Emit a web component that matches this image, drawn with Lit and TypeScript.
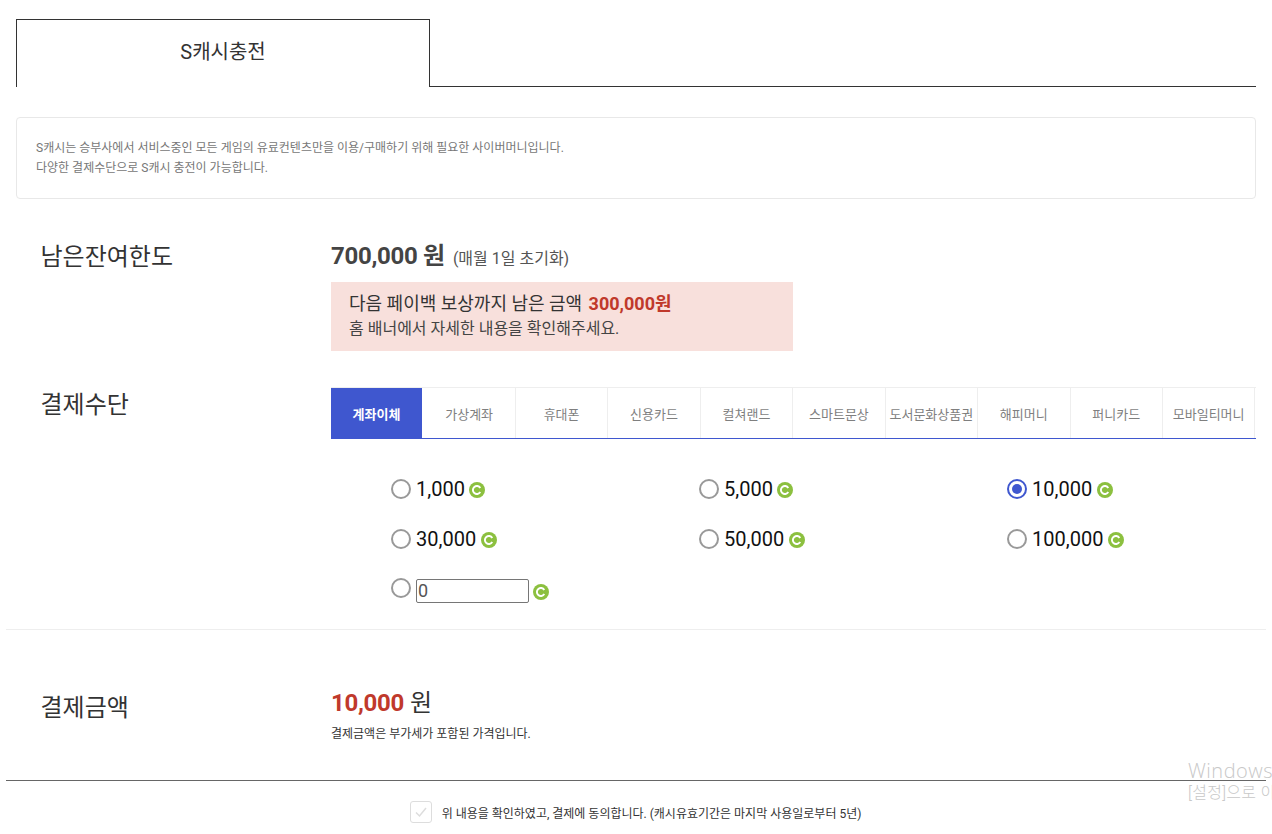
import { LitElement, html, css, svg } from "lit";
import { customElement } from "lit/decorators.js";

const METHODS = ["계좌이체","가상계좌","휴대폰","신용카드","컬쳐랜드","스마트문상","도서문화상품권","해피머니","퍼니카드","모바일티머니"];
const AMOUNTS = [
  { v: "1,000" }, { v: "5,000" }, { v: "10,000", on: true },
  { v: "30,000" }, { v: "50,000" }, { v: "100,000" },
];

const coin = svg`<svg class="coin" viewBox="0 0 16 16" width="16" height="16" aria-hidden="true"><circle cx="8" cy="8" r="8" fill="#8cc03f"/><path d="M11.3 5.9A4 4 0 1 0 11.3 10.1" fill="none" stroke="#fff" stroke-width="1.9"/></svg>`;

@customElement("app-root")
export class AppRoot extends LitElement {
  static styles = css`
    :host { display: block; width: 1272px; height: 834px; overflow: hidden; position: relative; background: #fff; color: #333;
      font-family: Roboto, "Noto Sans CJK KR", sans-serif; box-sizing: border-box; padding-top: 19px; }
    * { box-sizing: border-box; }
    .tabbar { display: flex; margin: 0 16px; height: 68px; }
    .tab { width: 414px; height: 68px; border: 1px solid #333; border-bottom: 0; display: flex; align-items: center; justify-content: center; font-size: 20px; padding-bottom: 7px; color: #333; }
    .tabfill { flex: 1; border-bottom: 1px solid #333; height: 68px; }
    .notice { margin: 30px 16px 0; height: 82px; border: 1px solid #e8e8e8; border-radius: 4px; padding: 20px 19px; font-size: 12px; line-height: 20px; color: #777; }
    .row { display: flex; padding-left: 40.5px; }
    .label { width: 290.5px; flex: none; font-size: 24px; line-height: 36px; color: #333; }
    .limit { margin-top: 39px; height: 149px; }
    .limit .label { padding-top: 1px; }
    .val { line-height: 36px; height: 37px; display: flex; align-items: baseline; }
    .val b { font-size: 24px; font-weight: 700; letter-spacing: -0.3px; color: #444; }
    .val span { font-size: 16px; color: #555; margin-left: 8px; }
    .banner { margin-top: 7px; width: 462px; height: 69px; background: #f8e0dc; padding: 9px 18px; color: #333; }
    .b1 { font-size: 18px; line-height: 26px; }
    .b1 b { color: #c0392b; font-weight: 700; margin-left: 2px; }
    .b2 { font-size: 16px; line-height: 22px; margin-top: 1px; color: #444; }
    .pay { height: 242px; }
    .main { width: 925px; }
    .methods { display: grid; grid-template-columns: repeat(10, 92.45px); height: 52px; border-top: 1px solid #eee; border-bottom: 1px solid #3f57cf; }
    .m { display: flex; align-items: center; justify-content: center; font-size: 13px; color: #7f7f7f; border-right: 1px solid #eee; white-space: nowrap; }
    .m.on { color: #fff; font-weight: 700; border-right: 0; padding-right: 1.45px; background: linear-gradient(to right, #3f57cf 91px, #fff 91px); }
    .amounts { display: grid; grid-template-columns: repeat(3, 308px); grid-auto-rows: 50px; padding: 25px 0 0 60px; }
    .opt { display: flex; align-items: center; height: 50px; font-size: 20px; color: #111; }
    .radio { width: 20px; height: 20px; border-radius: 50%; border: 2px solid #999; margin-right: 5px; flex: none; display: flex; align-items: center; justify-content: center; }
    .radio.on { border-color: #3f57cf; }
    .radio.on::after { content: ""; width: 10px; height: 10px; border-radius: 50%; background: #3f57cf; }
    .coin { margin-left: 4.5px; margin-top: 2px; flex: none; }
    .input { width: 113px; height: 24px; border: 1px solid #767676; border-radius: 2px; font-size: 18px; line-height: 22px; color: #555; padding-left: 1px; margin-top: 3px; }
    .custom .radio { margin-top: -2px; }
    .custom .coin { margin-left: 4px; margin-top: 5px; }
    .sep { height: 1px; margin: 0 6px; background: #eee; }
    .sep.dark { background: #666; }
    .total { margin-top: 60px; height: 90px; }
    .amount { line-height: 26px; display: flex; align-items: baseline; font-size: 24px; color: #333; }
    .amount b { color: #c0392b; font-size: 24px; font-weight: 700; letter-spacing: -0.3px; margin-right: 6px; }
    .note { font-size: 12px; line-height: 18px; color: #333; margin-top: 9px; }
    .agree { display: flex; align-items: center; justify-content: center; margin-top: 20px; font-size: 12px; color: #333; padding-right: 1px; }
    .cb { width: 22px; height: 22px; border: 1px solid #ddd; border-radius: 3px; margin-right: 10px; display: flex; align-items: center; justify-content: center; }
    .wm { position: absolute; left: 1188px; top: 759px; color: #c8c8c8; white-space: nowrap; }
    .wm1 { font-size: 20px; line-height: 24px; letter-spacing: 0.5px; font-family: "Open Sans", sans-serif; font-weight: 300; }
    .wm2 { font-size: 16px; line-height: 19px; letter-spacing: 0.3px; font-weight: 300; }
  `;

  render() {
    return html`
      <div class="tabbar"><div class="tab">S캐시충전</div><div class="tabfill"></div></div>
      <div class="notice">S캐시는 승부사에서 서비스중인 모든 게임의 유료컨텐츠만을 이용/구매하기 위해 필요한 사이버머니입니다.<br>다양한 결제수단으로 S캐시 충전이 가능합니다.</div>
      <div class="row limit">
        <div class="label">남은잔여한도</div>
        <div>
          <div class="val"><b>700,000 원</b><span>(매월 1일 초기화)</span></div>
          <div class="banner">
            <div class="b1">다음 페이백 보상까지 남은 금액 <b>300,000원</b></div>
            <div class="b2">홈 배너에서 자세한 내용을 확인해주세요.</div>
          </div>
        </div>
      </div>
      <div class="row pay">
        <div class="label">결제수단</div>
        <div class="main">
          <div class="methods">${METHODS.map((m, i) => html`<div class="m ${i === 0 ? "on" : ""}">${m}</div>`)}</div>
          <div class="amounts">
            ${AMOUNTS.map(a => html`<div class="opt"><span class="radio ${a.on ? "on" : ""}"></span>${a.v}${coin}</div>`)}
            <div class="opt custom"><span class="radio"></span><div class="input">0</div>${coin}</div>
          </div>
        </div>
      </div>
      <div class="sep"></div>
      <div class="row total">
        <div class="label">결제금액</div>
        <div>
          <div class="amount"><b>10,000</b>원</div>
          <div class="note">결제금액은 부가세가 포함된 가격입니다.</div>
        </div>
      </div>
      <div class="sep dark"></div>
      <div class="agree">
        <span class="cb"><svg width="14" height="12" viewBox="0 0 14 12"><path d="M2 6.5 5.5 10 12 2" fill="none" stroke="#ddd" stroke-width="1.5"/></svg></span>
        위 내용을 확인하였고, 결제에 동의합니다. (캐시유효기간은 마지막 사용일로부터 5년)
      </div>
      <div class="wm"><div class="wm1">Windows</div><div class="wm2">[설정]으로 이동</div></div>
    `;
  }
}
